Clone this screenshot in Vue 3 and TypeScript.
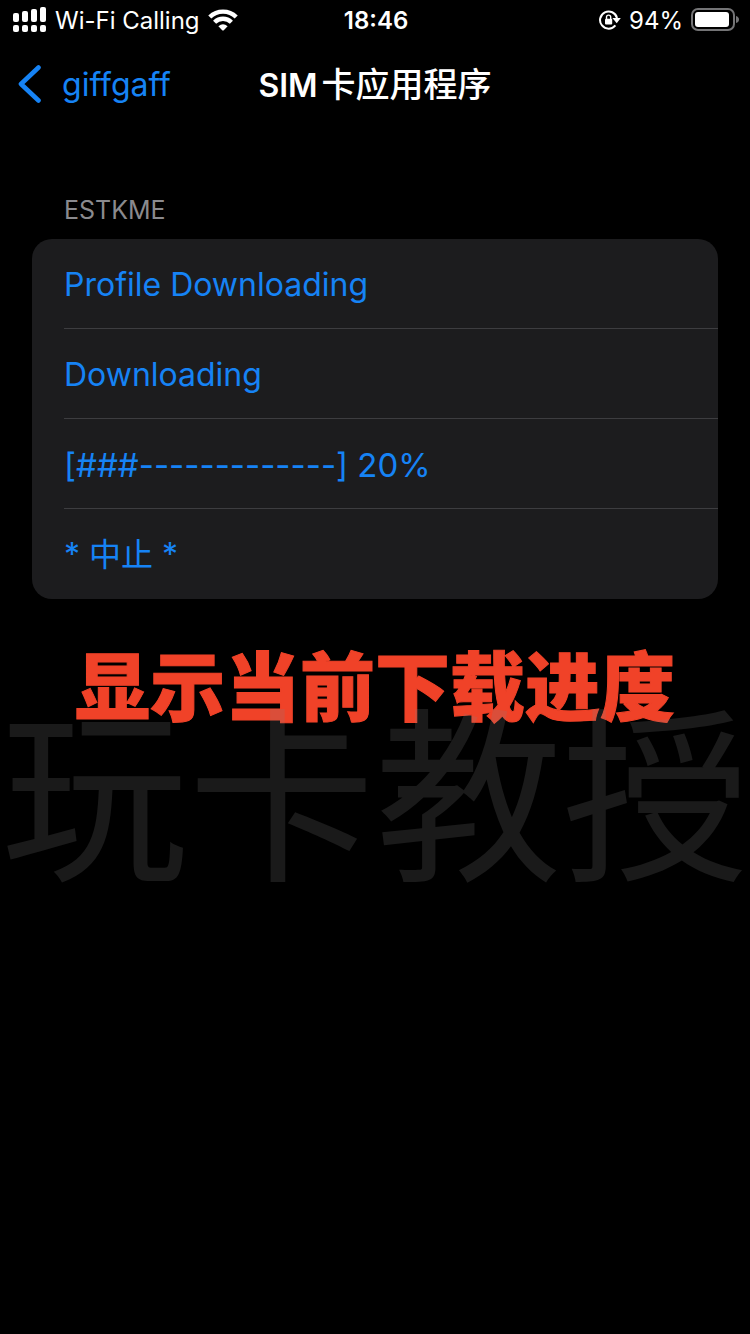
<script setup lang="ts">
import { ref } from 'vue'

interface MenuItem {
  id: string
  label: string
}

const carrier = 'Wi-Fi Calling'
const time = '18:46'
const battery = ref(94)
const bars: number[] = [9, 11, 13, 15]

const items: MenuItem[] = [
  { id: 'title', label: 'Profile Downloading' },
  { id: 'state', label: 'Downloading' },
  { id: 'progress', label: '[###-------------] 20%' },
  { id: 'abort', label: '* 中止 *' },
]
</script>

<template>
  <div class="screen">
    <header class="status">
      <div class="status-left">
        <svg class="signal" width="34" height="26" viewBox="0 0 34 26" aria-hidden="true">
          <g fill="#fff">
            <template v-for="(h, i) in bars" :key="i">
              <rect :x="i * 9" :y="15 - h" width="6" :height="h" rx="2" />
              <rect :x="i * 9" y="18" width="6" height="7" rx="2" />
            </template>
          </g>
        </svg>
        <span class="status-text">{{ carrier }}</span>
        <svg class="wifi" width="30" height="22" viewBox="0 0 30 22" aria-hidden="true">
          <g fill="none" stroke="#fff" stroke-width="4.4">
            <path d="M1.8 8 A19 19 0 0 1 28.2 8" />
            <path d="M6.6 13.2 A12 12 0 0 1 23.4 13.2" />
          </g>
          <path d="M10.4 17.2 Q15 13.2 19.6 17.2 L15.8 21.2 Q15 22 14.2 21.2 Z" fill="#fff" />
        </svg>
      </div>
      <time class="clock status-text">{{ time }}</time>
      <div class="status-right">
        <svg class="lock" width="22" height="20" viewBox="0 0 22 20" aria-hidden="true">
          <path d="M16.4 15.4 A8.6 8.6 0 1 1 18 8" fill="none" stroke="#fff" stroke-width="2" />
          <path d="M13.4 8 H21.8 L17.7 13.2 Z" fill="#fff" />
          <rect x="6" y="8.8" width="7.2" height="5.8" rx="1" fill="#fff" />
          <path d="M7.5 9 V7.2 A2.1 2.1 0 0 1 11.7 7.2 V9" fill="none" stroke="#fff" stroke-width="1.4" />
        </svg>
        <span class="status-text">{{ battery }}%</span>
        <svg class="battery" width="48" height="24" viewBox="0 0 48 24" aria-hidden="true">
          <rect x="1" y="1" width="42" height="21" rx="6" fill="none" stroke="#747476" stroke-width="2" />
          <rect x="4" y="4" :width="Math.round(36 * battery / 100)" height="15" rx="3" fill="#fff" />
          <path d="M45 8 Q48 9 48 11.5 Q48 14 45 15 Z" fill="#747476" />
        </svg>
      </div>
    </header>

    <nav class="nav">
      <button class="back" type="button">
        <svg width="24" height="38" viewBox="0 0 24 38" aria-hidden="true">
          <path d="M20.5 2.5 L3 19 L20.5 35.5" fill="none" stroke="#1683f5" stroke-width="4.6" stroke-linecap="round" stroke-linejoin="round" />
        </svg>
        <span class="back-label">giffgaff</span>
      </button>
      <h1 class="title"><span>SIM</span> <span class="title-cjk">卡应用程序</span></h1>
    </nav>

    <main class="content">
      <h2 class="section">ESTKME</h2>
      <ul class="list">
        <li v-for="item in items" :key="item.id">
          <button class="row" :class="{ progress: item.id === 'progress' }" type="button">{{ item.label }}</button>
        </li>
      </ul>
      <div class="caption-area">
        <p class="caption">显示当前下载进度</p>
        <p class="watermark">玩卡教授</p>
      </div>
    </main>
  </div>
</template>

<style>
body {
  background: #000;
}
</style>

<style scoped>
.screen {
  min-height: 100vh;
  box-sizing: border-box;
  overflow: hidden;
  background: #000;
  color: #fff;
  font-family: Inter, "Noto Sans CJK SC", sans-serif;
}

.status {
  display: grid;
  grid-template-columns: 1fr auto 1fr;
  align-items: center;
  height: 40px;
  padding: 0 11px 0 13px;
  font-size: 24px;
  line-height: 28px;
}

.status-left,
.status-right {
  display: flex;
  align-items: center;
  gap: 8px;
}

.status-right {
  justify-content: flex-end;
}

.status-text {
  padding-top: 2px;
}

.clock {
  font-weight: 600;
}

.nav {
  display: grid;
  grid-template-columns: 1fr auto 1fr;
  align-items: center;
  height: 88px;
  padding: 0 18px;
}

.back {
  display: flex;
  align-items: center;
  justify-self: start;
  gap: 20px;
  padding: 0;
  border: 0;
  background: none;
  color: #1683f5;
  font: inherit;
  font-size: 32px;
  line-height: 40px;
}

.back-label {
  padding-top: 2px;
}

.title {
  display: flex;
  align-items: baseline;
  gap: 4px;
  margin: 0;
  padding-top: 2px;
  font-size: 32px;
  font-weight: 600;
  line-height: 40px;
}

.title-cjk {
  font-size: 34px;
  font-weight: 500;
}

.content {
  padding: 66px 32px 0;
}

.section {
  margin: 0 0 13px;
  padding-left: 32px;
  color: #8a8a8e;
  font-size: 25px;
  font-weight: 400;
  line-height: 32px;
}

.list {
  margin: 0;
  padding: 0;
  overflow: hidden;
  border-radius: 20px;
  background: #1c1c1e;
  list-style: none;
}

.list li {
  height: 90px;
  padding-left: 32px;
}

.row {
  display: block;
  width: 100%;
  height: 90px;
  padding: 3px 0 0;
  border: 0;
  border-bottom: 1px solid #3d3d40;
  background: none;
  color: #1683f5;
  font: inherit;
  font-size: 32px;
  line-height: 40px;
  text-align: left;
}

.progress {
  font-size: 33px;
  font-feature-settings: "calt" 0;
}

.list li:last-child .row {
  border-bottom-color: transparent;
}

.caption-area {
  position: relative;
  margin: 41px -32px 0;
}

.caption {
  margin: 0;
  color: #f04228;
  font-size: 75px;
  font-weight: 900;
  line-height: 96px;
  text-align: center;
  -webkit-text-stroke: 1px #f04228;
}

.watermark {
  position: absolute;
  top: 49px;
  left: 50%;
  margin: 0;
  transform: translateX(-50%);
  color: rgba(128, 128, 128, 0.2);
  font-size: 187px;
  line-height: 220px;
  white-space: nowrap;
}
</style>
